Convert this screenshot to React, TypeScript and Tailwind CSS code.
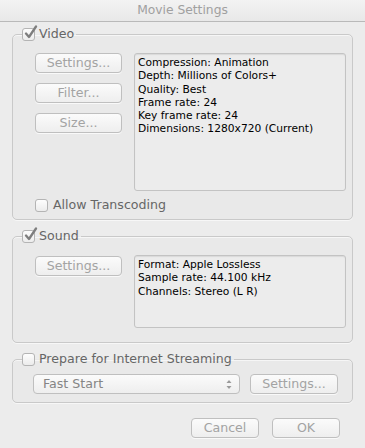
import React from 'react';

function Check({ checked }: { checked?: boolean }) {
  return (
    <span className="relative w-[13px] h-[13px] rounded-[3px] border border-[#b4b4b4] bg-linear-to-b from-[#fdfdfd] to-[#ececec] shrink-0">
      {checked && (
        <svg className="absolute left-[1px] top-[-4px]" width="14" height="15" viewBox="0 0 14 15">
          <path d="M2 8.5 L5 12 L12 1.5" fill="none" stroke="#7e7e7e" strokeWidth="2.3" strokeLinecap="round" strokeLinejoin="round" />
        </svg>
      )}
    </span>
  );
}

function Btn({ children, className = '' }: { children: React.ReactNode; className?: string }) {
  return (
    <div className={`h-[20px] flex items-center justify-center rounded-[4px] border border-[#bfbfbf] bg-linear-to-b from-[#fbfbfb] to-[#eeeeee] text-[12.6px] text-[#a3a3a3] shadow-[0_1px_0_rgba(255,255,255,0.7)] ${className}`}>
      {children}
    </div>
  );
}

function Group({ label, checked, className = '', children }: { label: string; checked?: boolean; className?: string; children: React.ReactNode }) {
  return (
    <fieldset className={`mx-[12px] rounded-[5px] border border-[#c9c9c9] bg-[#e9e9e9] shadow-[inset_0_1px_0_#f6f6f6,0_1px_0_#f7f7f7] ${className}`}>
      <legend className="ml-[9px] pr-[2px] flex items-center gap-[4px] h-[14px] leading-[14px] text-[12.6px] text-[#666666]">
        <Check checked={checked} />
        <span>{label}</span>
      </legend>
      {children}
    </fieldset>
  );
}

function InfoBox({ lines, className = '' }: { lines: string[]; className?: string }) {
  return (
    <div className={`w-[212px] rounded-[3px] border border-[#c3c3c3] bg-[#ececec] shadow-[inset_0_1px_1px_rgba(0,0,0,0.08)] pt-[2px] pl-[3px] text-[10.7px] leading-[13.3px] text-black ${className}`}>
      {lines.map((l) => (
        <div key={l}>{l}</div>
      ))}
    </div>
  );
}

export default function App() {
  return (
    <div className="w-[365px] h-[448px] bg-[#ececec] font-['DejaVu_Sans',sans-serif] overflow-hidden">
      <div className="h-[22px] border-b border-[#b9b9b9] bg-linear-to-b from-[#f3f3f3] to-[#e8e8e8] flex items-center justify-center text-[12.3px] text-[#a0a0a0]">
        Movie Settings
      </div>

      <Group label="Video" checked className="mt-[5px]">
        <div className="pt-[12px] pl-[22px] pr-[6px]">
          <div className="flex gap-[12px]">
            <div className="flex flex-col gap-[10px]">
              <Btn className="w-[87px]">Settings...</Btn>
              <Btn className="w-[87px]">Filter...</Btn>
              <Btn className="w-[87px]">Size...</Btn>
            </div>
            <InfoBox
              className="h-[138px]"
              lines={[
                'Compression: Animation',
                'Depth: Millions of Colors+',
                'Quality: Best',
                'Frame rate: 24',
                'Key frame rate: 24',
                'Dimensions: 1280x720 (Current)',
              ]}
            />
          </div>
          <div className="mt-[7px] mb-[7px] flex items-center gap-[5px] text-[12.6px] text-[#666666] leading-[14px]">
            <Check />
            <span>Allow Transcoding</span>
          </div>
        </div>
      </Group>

      <Group label="Sound" checked className="mt-[9px]">
        <div className="pt-[12px] pl-[22px] pr-[6px] pb-[14px] flex gap-[12px] items-start">
          <Btn className="w-[87px] mt-[1px]">Settings...</Btn>
          <InfoBox
            className="h-[73px]"
            lines={['Format: Apple Lossless', 'Sample rate: 44.100 kHz', 'Channels: Stereo (L R)']}
          />
        </div>
      </Group>

      <Group label="Prepare for Internet Streaming" className="mt-[9px]">
        <div className="pt-[8px] pl-[20px] pb-[8px] flex gap-[10px]">
          <div className="w-[207px] h-[20px] rounded-[4px] border border-[#bfbfbf] bg-linear-to-b from-[#fbfbfb] to-[#eeeeee] flex items-center justify-between pl-[9px] pr-[7px] text-[12.6px] text-[#858585]">
            <span>Fast Start</span>
            <svg width="6" height="11" viewBox="0 0 6 11">
              <path d="M0.5 4 L3 1 L5.5 4 Z" fill="#9a9a9a" />
              <path d="M0.5 7 L3 10 L5.5 7 Z" fill="#9a9a9a" />
            </svg>
          </div>
          <Btn className="w-[88px]">Settings...</Btn>
        </div>
      </Group>

      <div className="mt-[15px] pr-[25px] flex justify-end gap-[13px]">
        <Btn className="w-[68px] text-[#8e8e8e]">Cancel</Btn>
        <Btn className="w-[68px] text-[#8e8e8e]">OK</Btn>
      </div>
    </div>
  );
}
